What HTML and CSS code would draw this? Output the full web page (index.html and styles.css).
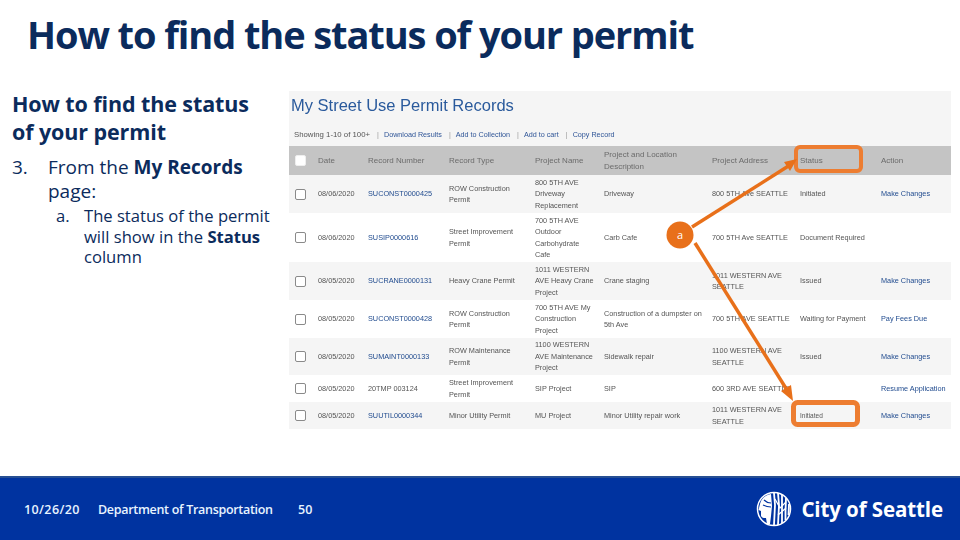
FILE: index.html
```html
<!DOCTYPE html>
<html lang="en">
<head>
    <meta charset="UTF-8">
    <meta name="viewport" content="width=device-width, initial-scale=1.0">
    <title>How to find the status of your permit</title>
    <link rel="stylesheet" href="styles.css">
</head>
<body>
<div class="slide">
    <h1 class="slide-title">How to find the status of your permit</h1>

    <div class="slide-body">
        <div class="notes">
            <h2>How to find the status of your permit</h2>
            <div class="step">
                <span class="step-num">3.</span>
                <p>From the <b>My Records</b> page:</p>
            </div>
            <div class="substep">
                <span class="step-num">a.</span>
                <p>The status of the permit will show in the <b>Status</b> column</p>
            </div>
        </div>

        <div class="records">
            <div class="records-title">My Street Use Permit Records</div>
            <div class="records-links">
                <span class="showing">Showing 1-10 of 100+</span>
                <span class="sep">|</span><a>Download Results</a>
                <span class="sep">|</span><a>Add to Collection</a>
                <span class="sep">|</span><a>Add to cart</a>
                <span class="sep">|</span><a>Copy Record</a>
            </div>
            <table class="records-table">
                <colgroup>
                    <col class="c-check"><col class="c-date"><col class="c-num"><col class="c-type">
                    <col class="c-name"><col class="c-desc"><col class="c-addr"><col class="c-status"><col class="c-action">
                </colgroup>
                <thead>
                    <tr>
                        <th><span class="box head-box"></span></th>
                        <th>Date</th><th>Record Number</th><th>Record Type</th><th>Project Name</th>
                        <th>Project and Location Description</th><th>Project Address</th><th>Status</th><th>Action</th>
                    </tr>
                </thead>
                <tbody>
                    <tr class="r1">
                        <td><span class="box"></span></td><td>08/06/2020</td><td><a>SUCONST0000425</a></td>
                        <td>ROW Construction Permit</td><td>800 5TH AVE Driveway Replacement</td><td>Driveway</td>
                        <td>800 5TH Ave SEATTLE</td><td>Initiated</td><td><a>Make Changes</a></td>
                    </tr>
                    <tr class="r2">
                        <td><span class="box"></span></td><td>08/06/2020</td><td><a>SUSIP0000616</a></td>
                        <td>Street Improvement Permit</td><td>700 5TH AVE Outdoor Carbohydrate Cafe</td><td>Carb Cafe</td>
                        <td>700 5TH Ave SEATTLE</td><td>Document Required</td><td></td>
                    </tr>
                    <tr class="r3">
                        <td><span class="box"></span></td><td>08/05/2020</td><td><a>SUCRANE0000131</a></td>
                        <td>Heavy Crane Permit</td><td>1011 WESTERN AVE Heavy Crane Project</td><td>Crane staging</td>
                        <td>1011 WESTERN AVE SEATTLE</td><td>Issued</td><td><a>Make Changes</a></td>
                    </tr>
                    <tr class="r4">
                        <td><span class="box"></span></td><td>08/05/2020</td><td><a>SUCONST0000428</a></td>
                        <td>ROW Construction Permit</td><td>700 5TH AVE My Construction Project</td><td>Construction of a dumpster on 5th Ave</td>
                        <td>700 5TH AVE SEATTLE</td><td>Waiting for Payment</td><td><a>Pay Fees Due</a></td>
                    </tr>
                    <tr class="r5">
                        <td><span class="box"></span></td><td>08/05/2020</td><td><a>SUMAINT0000133</a></td>
                        <td>ROW Maintenance Permit</td><td>1100 WESTERN AVE Maintenance Project</td><td>Sidewalk repair</td>
                        <td>1100 WESTERN AVE SEATTLE</td><td>Issued</td><td><a>Make Changes</a></td>
                    </tr>
                    <tr class="r6">
                        <td><span class="box"></span></td><td>08/05/2020</td><td>20TMP 003124</td>
                        <td>Street Improvement Permit</td><td>SIP Project</td><td>SIP</td>
                        <td>600 3RD AVE SEATTLE</td><td></td><td><a>Resume Application</a></td>
                    </tr>
                    <tr class="r7">
                        <td><span class="box"></span></td><td>08/05/2020</td><td><a>SUUTIL0000344</a></td>
                        <td>Minor Utility Permit</td><td>MU Project</td><td>Minor Utility repair work</td>
                        <td>1011 WESTERN AVE SEATTLE</td><td><span class="small">Initiated</span></td><td><a>Make Changes</a></td>
                    </tr>
                </tbody>
            </table>
        </div>
    </div>

    <!-- callouts drawn over the screenshot -->
    <svg class="callouts" width="960" height="540" viewBox="0 0 960 540">
        <rect x="796" y="147" width="65" height="24" rx="4" fill="none" stroke="#ed7d31" stroke-width="4"/>
        <rect x="793.500" y="402.500" width="64" height="22" rx="4" fill="none" stroke="#ed7d31" stroke-width="5"/>
        <line x1="692" y1="227" x2="790" y2="165" stroke="#e8701a" stroke-width="3.500"/>
        <polygon points="797,159 784,162 790,171" fill="#e8701a"/>
        <line x1="695" y1="243" x2="787" y2="390" stroke="#e8701a" stroke-width="3.500"/>
        <polygon points="793,401 781,391 791,385" fill="#e8701a"/>
        <circle cx="680" cy="235" r="13.500" fill="#e8701a"/>
        <text x="680" y="239" text-anchor="middle" class="callout-label">a</text>
    </svg>

    <footer class="slide-footer">
        <span class="foot-date">10/26/20</span>
        <span class="foot-dept">Department of Transportation</span>
        <span class="foot-page">50</span>
        <div class="brand">
            <svg width="36" height="36" viewBox="0 0 36 36">
                <circle cx="18" cy="18" r="16.500" fill="none" stroke="#fff" stroke-width="1.500"/>
                <!-- face and hair -->
                <path d="M15 3 C9 4 5 8 4 13 L2.500 19 L5 20 L5 25 C6 27 8 27 10 27 L11 33 L14 33 L15 25 L16 15 Z" fill="#fff"/>
                <path d="M8 9 C10 11 12 12 15 12 M7 14 C9 15 11 16 15 16" fill="none" stroke="#0033a0" stroke-width="1.200"/>
                <!-- stripes -->
                <path d="M18 2 L19 14 L18 34 M22 2 L23 14 L22 34 M26 4 L26 14 L26 32 M30 7 L29.500 20 L29.500 29 M33 13 L32.500 24" fill="none" stroke="#fff" stroke-width="1.800"/>
                <path d="M19 8 L24 17 L30 11 M22 24 L30 17" fill="none" stroke="#fff" stroke-width="1.200"/>
            </svg>
            <span class="brand-name">City of Seattle</span>
        </div>
    </footer>
</div>
</body>
</html>
```

FILE: styles.css
```css
/* Base styling */
body {
    margin: 0;
    background-color: #fff;
    font-family: "Open Sans", "Liberation Sans", sans-serif;
}

.slide {
    position: relative;
    width: 960px;
    height: 540px;
    overflow: hidden;
    display: flex;
    flex-direction: column;
}

.slide-title {
    margin: 0;
    height: 91px;
    padding: 9px 0 0 27px;
    box-sizing: border-box;
    font-size: 38px;
    line-height: 50px;
    font-weight: 700;
    letter-spacing: -1.1px;
    color: #0b2b5c;
    white-space: nowrap;
}

.slide-body {
    flex: 1;
    display: flex;
}

/* Left column */
.notes {
    width: 289px;
    flex: none;
    padding: 0 12px;
    box-sizing: border-box;
    color: #0b2b5c;
}

.notes h2 {
    max-width: 250px;
    margin: -1px 0 9px;
    font-size: 21.500px;
    line-height: 28px;
    font-weight: 700;
    letter-spacing: -0.1px;
}

.notes p {
    margin: 0;
}

.step,
.substep {
    display: flex;
}

.step {
    font-size: 19px;
    line-height: 24px;
    margin-bottom: 3px;
}

.step .step-num {
    width: 36px;
    flex: none;
}

.substep {
    font-size: 16.600px;
    line-height: 20.500px;
    padding-left: 44px;
}

.substep .step-num {
    width: 28px;
    flex: none;
}

/* Pasted records screenshot */
.records {
    width: 662px;
    height: 338px;
    overflow: hidden;
    background-color: #f5f5f5;
    font-family: "Liberation Sans", sans-serif;
    color: #555;
    filter: blur(0.4px);
}

.records-title {
    height: 32px;
    padding: 3px 0 0 2px;
    box-sizing: border-box;
    font-size: 16.500px;
    line-height: 22px;
    color: #2a5a9c;
}

.records-links {
    height: 23px;
    padding: 5px 0 0 5px;
    box-sizing: border-box;
    font-size: 7.200px;
    line-height: 13px;
    white-space: nowrap;
}

.records-links .showing {
    font-size: 7.800px;
}

.records-links a {
    color: #2f5597;
}

.records-links .sep {
    margin: 0 5px 0 5px;
    color: #999;
}

.records-table {
    width: 662px;
    table-layout: fixed;
    border-collapse: collapse;
    font-size: 7.300px;
    line-height: 11.500px;
}

.records-table a {
    color: #1f4a8e;
}

.c-check { width: 24px; }
.c-date { width: 50px; }
.c-num { width: 81px; }
.c-type { width: 86px; }
.c-name { width: 69px; }
.c-desc { width: 108px; }
.c-addr { width: 88px; }
.c-status { width: 81px; }
.c-action { width: 75px; }

.records-table th {
    height: 29px;
    padding: 0 4px 0 5px;
    background-color: #c4c4c4;
    color: #6b6b6b;
    font-size: 8px;
    font-weight: 400;
    text-align: left;
}

.records-table td {
    padding: 0 4px 0 5px;
}

.records-table tbody tr:nth-child(even) {
    background-color: #fff;
}

.records-table th:first-child,
.records-table td:first-child {
    padding: 0 0 0 6px;
}

.r1 td { height: 38px; }
.r2 td { height: 49px; }
.r3 td { height: 38px; }
.r4 td { height: 38px; }
.r5 td { height: 37px; }
.r6 td { height: 27px; }
.r7 td { height: 27px; }

.box {
    display: block;
    width: 9px;
    height: 9px;
    border: 1px solid #8a8a8a;
    border-radius: 2px;
    background-color: #fff;
}

.head-box {
    border-color: #eee;
}

.small {
    font-size: 6.500px;
}

/* Arrows and highlight boxes */
.callouts {
    position: absolute;
    top: 0;
    left: 0;
}

.callout-label {
    font-family: "Open Sans", sans-serif;
    font-size: 11px;
    fill: #fff;
}

/* Footer bar */
.slide-footer {
    height: 64px;
    display: flex;
    align-items: center;
    background-color: #0033a0;
    border-top: 2px solid #274f93;
    box-sizing: border-box;
    color: #e8f4ff;
    font-size: 12.500px;
    font-weight: 600;
}

.foot-date {
    margin-left: 24px;
    width: 74px;
    letter-spacing: 0.4px;
}

.foot-dept {
    width: 200px;
    letter-spacing: -0.3px;
}

.brand {
    margin-left: auto;
    margin-right: 17px;
    display: flex;
    align-items: center;
    gap: 9px;
    color: #fff;
}

.brand-name {
    font-size: 20.500px;
    font-weight: 700;
    letter-spacing: -0.1px;
}
```
